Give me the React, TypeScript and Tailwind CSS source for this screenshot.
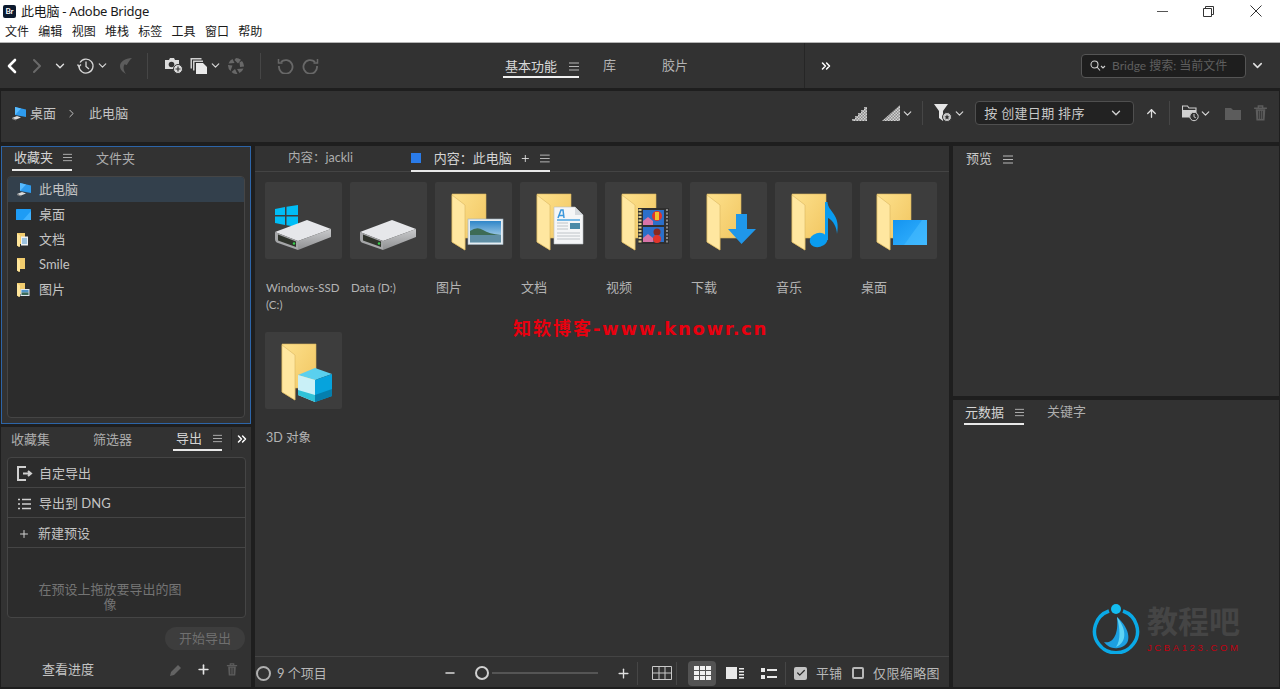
import { ChevronDown, ChevronLeft, ChevronRight, ChevronsRight, Plus, Minus, ArrowUp, Check } from "lucide-react";

const Burger = ({ className = "" }: { className?: string }) => (
  <svg width="10" height="9" viewBox="0 0 10 9" className={className}>
    <path d="M0 1h10M0 4.500h10M0 8h10" stroke="#b8b8b8" strokeWidth="1" fill="none" />
  </svg>
);

const Trash = ({ size = 15, color = "#5c5c5c" }: { size?: number; color?: string }) => (
  <svg width={size} height={size + 1} viewBox="0 0 14 15">
    <path d="M1 3h12M5 3V1h4v2" stroke={color} strokeWidth="1.400" fill="none" />
    <path d="M2.500 4h9l-.7 10.500H3.200Z" fill={color} />
    <path d="M5.300 5.500v7.500M7 5.500v7.500M8.700 5.500v7.500" stroke="#323232" strokeWidth=".8" />
  </svg>
);

const PcIcon = () => (
  <svg width="16" height="15" viewBox="0 0 16 15">
    <path d="M4 1l11 2.500v7.500L4 9Z" fill="#2e9bee" />
    <path d="M4 1l6 1.400-6 6.600Z" fill="#58bbff" />
    <path d="M1 12l5-2 4 1.500-5 2Z" fill="#dcdcdc" />
    <path d="M1 12l4 1.500v1L1 13Z" fill="#8a8a8a" />
  </svg>
);

const DesktopSmall = () => (
  <svg width="15" height="11" viewBox="0 0 15 11">
    <rect width="15" height="11" rx=".5" fill="#1e9cf5" />
    <path d="M7 11L15 2v9Z" fill="#3fb2ff" />
  </svg>
);

const FolderSmall = ({ badge }: { badge?: "doc" | "pic" }) => (
  <svg width="14" height="14" viewBox="0 0 14 14">
    <path d="M1 0h8v11H3v3L1 12.500Z" fill="#f2cd6e" />
    <path d="M1 .5l3 2V14l-3-1.500Z" fill="#ffe69b" />
    {badge === "doc" && (
      <g>
        <rect x="5" y="3.500" width="7" height="9" fill="#eef1f4" />
        <path d="M6 6h5M6 8h5M6 10h5" stroke="#4a93c9" strokeWidth="1" />
      </g>
    )}
    {badge === "pic" && (
      <g>
        <rect x="4.500" y="6" width="9" height="7" fill="#dfe8ef" />
        <rect x="5.500" y="7" width="7" height="2.500" fill="#4f94c8" />
        <rect x="5.500" y="9.500" width="7" height="2.500" fill="#3a6a5a" />
      </g>
    )}
  </svg>
);

const Folder = () => (
  <g>
    <path d="M17 12H51V56H30V68L17 60Z" fill="url(#fold)" stroke="#d9b660" strokeWidth=".6" />
    <path d="M17 13L30 23V68L17 60Z" fill="#ffe7a0" stroke="#d9b660" strokeWidth=".6" />
  </g>
);

const Defs = () => (
  <svg width="0" height="0" className="absolute">
    <defs>
      <linearGradient id="fold" x1="0" y1="0" x2="1" y2="1">
        <stop offset="0" stopColor="#fde18d" />
        <stop offset="1" stopColor="#f0c35c" />
      </linearGradient>
      <linearGradient id="sky" x1="0" y1="0" x2="0" y2="1">
        <stop offset="0" stopColor="#2f86c8" />
        <stop offset="1" stopColor="#cfe6f2" />
      </linearGradient>
      <linearGradient id="blue" x1="0" y1="0" x2="1" y2="1">
        <stop offset="0" stopColor="#1494f0" />
        <stop offset="1" stopColor="#36b4ff" />
      </linearGradient>
      <linearGradient id="body" x1="0" y1="0" x2="0" y2="1">
        <stop offset="0" stopColor="#c9cacc" />
        <stop offset="1" stopColor="#8f9092" />
      </linearGradient>
      <pattern id="chk" width="3" height="3" patternUnits="userSpaceOnUse">
        <rect width="3" height="3" fill="#8c8c8c" />
        <rect width="1.500" height="1.500" fill="#d4d4d4" />
        <rect x="1.500" y="1.500" width="1.500" height="1.500" fill="#d4d4d4" />
      </pattern>
    </defs>
  </svg>
);

const Drive = () => (
  <g>
    <path d="M10 50L42 38L66 47L33 59Z" fill="#e6e7ea" />
    <path d="M33 59L66 47V55L33 68Z" fill="url(#body)" />
    <path d="M10 50L33 59V68L13 61Q10 60 10 57Z" fill="#a5a6a8" />
    <path d="M13 52.500L31 59.500V65L13 58.500Z" fill="#30342c" />
    <circle cx="29" cy="61.500" r="1.200" fill="#35d04a" />
  </g>
);

const Thumb = ({ kind }: { kind: string }) => (
  <svg width="77" height="77" viewBox="0 0 77 77">
    {kind === "c" && (
      <g>
        <path d="M10 27L20 25V33H10ZM21.500 24.700L33 23V33H21.500ZM10 34.500H20V43L10 41ZM21.500 34.500H33V45L21.500 43.300Z" fill="#00bdf6" />
        <Drive />
      </g>
    )}
    {kind === "d" && <Drive />}
    {kind !== "c" && kind !== "d" && <Folder />}
    {kind === "pic" && (
      <g>
        <rect x="33" y="37" width="35" height="25.500" fill="#e6edf2" stroke="#9fb2c0" strokeWidth=".6" />
        <rect x="35" y="39" width="31" height="21.500" fill="url(#sky)" />
        <path d="M35 49Q42 44 48 48T66 53V55H35Z" fill="#3d6b55" />
        <rect x="35" y="53" width="31" height="7.500" fill="#5f8ea4" />
      </g>
    )}
    {kind === "doc" && (
      <g>
        <path d="M34 25H55L63 33V62H34Z" fill="#f5f6f7" stroke="#b9bfc4" strokeWidth=".6" />
        <path d="M55 25V33H63Z" fill="#d6dade" />
        <path d="M38 36L41 28H43L44 36M39 33.500H44" stroke="#3b97dc" strokeWidth="1.500" fill="none" />
        <path d="M37 38H60" stroke="#4ba4e0" strokeWidth="1.500" />
        <rect x="50" y="41" width="10" height="6" fill="#4a8aa8" />
        <path d="M37 41H48M37 44H48M37 47H48M37 51H60M37 54H60M37 57H60" stroke="#bfc4c8" strokeWidth="1" />
      </g>
    )}
    {kind === "video" && (
      <g>
        <rect x="33" y="26" width="31" height="36" fill="#2f2f2f" />
        <path d="M35 27v34" stroke="#d9c98a" strokeWidth="3" strokeDasharray="2 1.500" />
        <path d="M62 27v34" stroke="#8a8a8a" strokeWidth="2" strokeDasharray="2 1.500" />
        <rect x="38" y="28" width="21" height="15" fill="#2c6fc9" />
        <rect x="38" y="45" width="21" height="15" fill="#2c6fc9" />
        <path d="M38 39l5-4 5 4v4H38ZM38 56l5-4 5 4v4H38Z" fill="#d874a8" />
        <circle cx="52" cy="34" r="5" fill="#e2352a" />
        <circle cx="52" cy="50" r="3.500" fill="#8a2a20" />
        <circle cx="52" cy="57" r="4" fill="#e2352a" />
        <path d="M50 30h4v8h-4Z" fill="#f0c030" />
      </g>
    )}
    {kind === "down" && <path d="M46 32H57V47H66L51.500 62L38 47H46Z" fill="#1f97ea" />}
    {kind === "music" && (
      <g>
        <ellipse cx="43.500" cy="58" rx="9" ry="7" fill="#0a9cf0" transform="rotate(-15 43.500 58)" />
        <path d="M50 20H52.500C53 30 66 32 62 52C62 46 58 38 53 36V58H50Z" fill="#0a9cf0" />
      </g>
    )}
    {kind === "desk" && (
      <g>
        <rect x="33" y="38" width="34" height="25" fill="url(#blue)" />
        <path d="M44 63L62 38H67V63Z" fill="#4cc0ff" opacity=".5" />
      </g>
    )}
    {kind === "cube" && (
      <g>
        <path d="M33 43L50 36L67 42L50 48Z" fill="#5ad0ee" />
        <path d="M33 43L50 48V70L33 63Z" fill="#c9f0f7" />
        <path d="M33 58L50 63V70L33 63Z" fill="#2fc2d8" />
        <path d="M50 48L67 42V64L50 70Z" fill="#06a3dd" />
        <path d="M50 63L67 57V64L50 70Z" fill="#057fae" />
      </g>
    )}
  </svg>
);

const items = [
  { kind: "c", name: "Windows-SSD (C:)", size: "text-[11.500px]" },
  { kind: "d", name: "Data (D:)", size: "text-[11.500px]" },
  { kind: "pic", name: "图片", size: "text-[13px]" },
  { kind: "doc", name: "文档", size: "text-[13px]" },
  { kind: "video", name: "视频", size: "text-[13px]" },
  { kind: "down", name: "下载", size: "text-[13px]" },
  { kind: "music", name: "音乐", size: "text-[13px]" },
  { kind: "desk", name: "桌面", size: "text-[13px]" },
  { kind: "cube", name: "3D 对象", size: "text-[12.500px]" },
];

const Sep = ({ className = "" }: { className?: string }) => <div className={`w-px h-[26px] bg-[#464646] ${className}`} />;

function TitleBar() {
  return (
    <div className="h-[43px] bg-white border-b border-[#b5b5b5] shrink-0 text-[#1a1a1a]">
      <div className="h-[22px] flex items-center">
        <div className="ml-[3px] w-[13px] h-[13px] rounded-[2px] bg-[#0c1a2e] flex items-center justify-center text-[8px] leading-none font-bold text-white">Br</div>
        <div className="ml-[5px] text-[13px] leading-none font-['Noto_Sans','Noto_Sans_CJK_SC',sans-serif] tracking-[-0.3px]">此电脑 - Adobe Bridge</div>
        <div className="ml-auto flex items-center">
          <div className="w-[11px] h-px bg-[#555] mr-[35px]" />
          <svg width="11" height="11" viewBox="0 0 11 11" className="mr-[36px]">
            <path d="M.5 2.500h8v8h-8ZM2.500 2.500v-2h8v8h-2" stroke="#333" fill="none" />
          </svg>
          <svg width="12" height="12" viewBox="0 0 12 12" className="mr-[18px]">
            <path d="M.5.500l11 11M11.500.500l-11 11" stroke="#333" />
          </svg>
        </div>
      </div>
      <div className="h-[20px] flex items-center pl-[5px] gap-[9.300px] text-[12px] leading-none">
        {["文件", "编辑", "视图", "堆栈", "标签", "工具", "窗口", "帮助"].map((m) => (
          <span key={m}>{m}</span>
        ))}
      </div>
    </div>
  );
}

function Toolbar() {
  return (
    <div className="h-[45px] bg-[#323232] shrink-0 flex items-center">
      <ChevronLeft size={24} strokeWidth={2.600} className="text-white" />
      <ChevronRight size={24} strokeWidth={2} className="ml-[1px] text-[#6a6a6a]" />
      <ChevronDown size={14} strokeWidth={2.400} className="ml-[4px] text-[#e0e0e0]" />
      <svg width="18" height="18" viewBox="0 0 18 18" className="ml-[10px]" fill="none" stroke="#d6d6d6" strokeWidth="1.300">
        <path d="M3 5.500A7 7 0 1 1 2 9" />
        <path d="M.5 7.500L2 9.500L4 7.500M9 4.500V9.500L12 12" />
      </svg>
      <ChevronDown size={13} strokeWidth={2.200} className="ml-[1px] text-[#d6d6d6]" />
      <svg width="15" height="17" viewBox="0 0 15 17" className="ml-[9px]">
        <path d="M14 1C7 1 2 5 2 9c0 4 3 6 6 8-3-4-3-8-1-10 1 2 2 1 3-1 1-2 2-3 4-5Z" fill="#5c5c5c" />
      </svg>
      <Sep className="ml-[14px]" />
      <svg width="19" height="17" viewBox="0 0 19 17" className="ml-[16px]">
        <path d="M1 3h4l1-2h4l1 2h4v9H1Z" fill="#dcdcdc" />
        <circle cx="7.500" cy="7.500" r="2.800" fill="#323232" />
        <circle cx="14" cy="12" r="4.500" fill="#dcdcdc" stroke="#323232" />
        <path d="M14 9.500v5M11.500 12h5" stroke="#323232" strokeWidth="1.200" />
      </svg>
      <svg width="18" height="18" viewBox="0 0 18 18" className="ml-[7px]">
        <path d="M.5 1h11v1.500h-9.500v9H.5Z" fill="#d0d0d0" />
        <path d="M3 3.500h10v1.500h-8.500v8.500H3Z" fill="#d0d0d0" />
        <path d="M6 6h7l4 4v7H6Z" fill="#eaeaea" />
      </svg>
      <ChevronDown size={13} strokeWidth={2.200} className="ml-[1px] text-[#d6d6d6]" />
      <svg width="16" height="16" viewBox="0 0 16 16" className="ml-[6px]" fill="#686868">
        <path d="M8 0a8 8 0 0 1 5 1.800L10 5.500 6.500 2ZM14 3a8 8 0 0 1 2 5.500l-4 .500-.500-4.800ZM15.500 10.500a8 8 0 0 1-4 4.500l-2.500-4ZM9.500 16a8 8 0 0 1-6-2l3.500-3ZM2.500 13a8 8 0 0 1-2.500-6l4.500.500ZM.500 5.500a8 8 0 0 1 4-4.500l2 4Z" />
      </svg>
      <Sep className="ml-[16px]" />
      <svg width="17" height="17" viewBox="0 0 17 17" className="ml-[16px]" fill="none" stroke="#686868" strokeWidth="1.800">
        <path d="M4 5A6.800 6.800 0 1 1 2 9" />
        <path d="M1.500 2v4h4" strokeWidth="1.500" />
      </svg>
      <svg width="17" height="17" viewBox="0 0 17 17" className="ml-[8px]" fill="none" stroke="#686868" strokeWidth="1.800">
        <path d="M13 5A6.800 6.800 0 1 0 15 9" />
        <path d="M15.500 2v4h-4" strokeWidth="1.500" />
      </svg>
      <div className="ml-[184px] w-[76px] h-[25px] self-start mt-[10px] border-b-2 border-[#f0f0f0] flex items-center gap-[12px] pl-[2px] pt-[3px] text-[13px] text-[#d8d8d8]">
        <span className="whitespace-nowrap leading-none">基本功能</span>
        <Burger />
      </div>
      <span className="ml-[24px] text-[13px] text-[#b4b4b4] leading-none">库</span>
      <span className="ml-[46px] text-[13px] text-[#b4b4b4] leading-none">胶片</span>
      <div className="ml-[116px] w-px h-full bg-[#262626]" />
      <ChevronsRight size={14} strokeWidth={2.600} className="ml-[14px] text-white" />
      <div className="ml-[248px] w-[165px] h-[24px] bg-[#1e1e1e] border border-[#555] rounded-[4px] flex items-center pl-[8px] text-[12px] text-[#5e5e5e]">
        <svg width="16" height="12" viewBox="0 0 16 12" fill="none" stroke="#d0d0d0" strokeWidth="1.100">
          <circle cx="4.500" cy="4.500" r="3.500" />
          <path d="M7 7l3 3.500M11 6l2 2 2-2" />
        </svg>
        <span className="ml-[6px] leading-none whitespace-nowrap">Bridge 搜索: 当前文件</span>
      </div>
      <ChevronDown size={15} strokeWidth={2.400} className="ml-[4px] text-[#e0e0e0]" />
    </div>
  );
}

function PathBar() {
  return (
    <div className="h-[51px] bg-[#323232] shrink-0 mt-[3px] mx-px pb-[7px] flex items-center text-[13px] text-[#c4c4c4]">
      <div className="ml-[10px]"><PcIcon /></div>
      <span className="ml-[3px] leading-none">桌面</span>
      <ChevronRight size={13} strokeWidth={1.800} className="ml-[9px] text-[#c4c4c4]" />
      <span className="ml-[11px] leading-none whitespace-nowrap tracking-[0.1px]">此电脑</span>
      <svg width="16" height="15" viewBox="0 0 16 15" className="ml-[724px]">
        <path d="M0 15V13H3V10H6V7H9V4H12V1H15V15Z" fill="url(#chk)" />
      </svg>
      <svg width="18" height="16" viewBox="0 0 18 16" className="ml-[14px]">
        <path d="M0 16h18V0Z" fill="url(#chk)" />
      </svg>
      <ChevronDown size={13} strokeWidth={2.200} className="ml-px text-[#d6d6d6]" />
      <div className="ml-[8px]"><Sep className="!h-[24px]" /></div>
      <svg width="19" height="20" viewBox="0 0 19 20" className="ml-[11px]">
        <path d="M0 1h14L9 8v10L5 15V8Z" fill="#e6e6e6" />
        <circle cx="13" cy="14" r="4.500" fill="#c8c8c8" stroke="#323232" />
        <path d="M13 11.500l.8 1.700 1.700.200-1.300 1.200.4 1.800-1.600-.900-1.600.900.4-1.800-1.300-1.200 1.700-.200Z" fill="#323232" />
      </svg>
      <ChevronDown size={13} strokeWidth={2.200} className="text-[#d6d6d6]" />
      <div className="ml-[9px] w-[159px] h-[24px] bg-[#222] border border-[#4f4f4f] rounded-[4px] flex items-center justify-between pl-[8px] pr-[10px] text-[#c8c8c8] tracking-[0.3px]">
        <span className="leading-none whitespace-nowrap">按 创建日期 排序</span>
        <ChevronDown size={14} strokeWidth={2.400} className="text-[#d0d0d0]" />
      </div>
      <ArrowUp size={13} strokeWidth={2.400} className="ml-[11px] text-[#e0e0e0]" />
      <div className="ml-[11px]"><Sep className="!h-[24px]" /></div>
      <svg width="17" height="18" viewBox="0 0 17 18" className="ml-[12px]">
        <path d="M.5 2h5l1.500 2h7v9H.5Z" fill="none" stroke="#d0d0d0" strokeWidth="1.100" />
        <path d="M1 6h13v7H1Z" fill="#d0d0d0" />
        <circle cx="12" cy="12.500" r="4.200" fill="#323232" stroke="#d0d0d0" />
        <path d="M12 10v2.800l1.800 1" stroke="#d0d0d0" fill="none" />
      </svg>
      <ChevronDown size={13} strokeWidth={2.200} className="text-[#d6d6d6]" />
      <svg width="16" height="13" viewBox="0 0 16 13" className="ml-[13px]">
        <path d="M0 1h6l2 2h8v10H0Z" fill="#5c5c5c" />
      </svg>
      <div className="ml-[12px]"><Trash size={15} /></div>
    </div>
  );
}

function FavoritesPanel() {
  const rows = [
    { icon: <PcIcon />, label: "此电脑" },
    { icon: <DesktopSmall />, label: "桌面" },
    { icon: <FolderSmall badge="doc" />, label: "文档" },
    { icon: <FolderSmall />, label: "Smile" },
    { icon: <FolderSmall badge="pic" />, label: "图片" },
  ];
  return (
    <div className="h-[278px] bg-[#323232] border border-[#2d65a8] flex flex-col shrink-0">
      <div className="h-[24px] flex items-end pl-[10px] text-[13px]">
        <div className="w-[60px] h-[22px] border-b-2 border-[#e8e8e8] flex items-center gap-[10px] pl-[2px] pb-[3px] text-[#d4d4d4]">
          <span className="whitespace-nowrap leading-none">收藏夹</span>
          <Burger />
        </div>
        <span className="ml-[24px] h-[22px] pt-[3px] leading-none text-[#adadad] whitespace-nowrap">文件夹</span>
      </div>
      <div className="flex-1 mx-[5px] mt-[5px] mb-[5px] bg-[#2c2c2c] border border-[#454545] rounded-[4px] overflow-hidden text-[12px] text-[#c4c4c4]">
        {rows.map((r, i) => (
          <div key={r.label} className={`h-[25px] flex items-center ${i === 0 ? "bg-[#33404c]" : ""}`}>
            <div className="w-[31px] pl-[8px] flex items-center">{r.icon}</div>
            <span className="text-[13px] leading-none">{r.label}</span>
          </div>
        ))}
      </div>
    </div>
  );
}

function ExportPanel() {
  return (
    <div className="flex-1 mt-[3px] bg-[#323232] flex flex-col text-[13px]">
      <div className="h-[24px] mb-[6px] flex items-center pl-[10px] text-[#adadad]">
        <span className="w-[82px] leading-none">收藏集</span>
        <span className="w-[80px] leading-none">筛选器</span>
        <div className="w-[49px] h-[24px] border-b-2 border-[#e8e8e8] flex items-center gap-[11px] pl-[3px] text-[#d4d4d4]">
          <span className="whitespace-nowrap leading-none">导出</span>
          <Burger />
        </div>
        <div className="ml-[9px] w-px h-[21px] bg-[#262626]" />
        <ChevronsRight size={14} strokeWidth={2.600} className="ml-[3px] text-white" />
      </div>
      <div className="h-[161px] ml-[6px] w-[239px] border border-[#454545] rounded-[4px] bg-[#2c2c2c] flex flex-col text-[#c4c4c4]">
        <div className="h-[30px] border-b border-[#454545] pt-[2px] flex items-center">
          <svg width="16" height="15" viewBox="0 0 16 15" className="ml-[9px]" fill="none" stroke="#d0d0d0" strokeWidth="2">
            <path d="M9 1H1v13h8M6 7.500h7M11 5l3 2.500-3 2.500" />
          </svg>
          <span className="ml-[6px] leading-none">自定导出</span>
        </div>
        <div className="h-[30px] border-b border-[#454545] pt-[2px] flex items-center">
          <svg width="13" height="12" viewBox="0 0 13 12" className="ml-[10px]" stroke="#d0d0d0" strokeWidth="1.600">
            <path d="M0 1.500h2M0 6h2M0 10.500h2M4 1.500h9M4 6h9M4 10.500h9" />
          </svg>
          <span className="ml-[8px] leading-none whitespace-nowrap">导出到 DNG</span>
        </div>
        <div className="h-[30px] border-b border-[#454545] pt-[2px] flex items-center">
          <Plus size={12} strokeWidth={2} className="ml-[10px] text-[#d0d0d0]" />
          <span className="ml-[8px] leading-none">新建预设</span>
        </div>
        <div className="flex-1 flex flex-col items-start justify-end pl-[27px] pb-[5px] text-[#747474] leading-[15px]">
          <span className="w-[150px] text-center">在预设上拖放要导出的图像</span>
        </div>
      </div>
      <div className="mt-[9px] mr-[6px] self-end w-[80px] h-[23px] rounded-full bg-[#3d3d3d] text-[#6f6f6f] flex items-center justify-center leading-none">开始导出</div>
      <div className="mt-[12px] flex items-center text-[#c4c4c4]">
        <span className="ml-[41px] leading-none">查看进度</span>
        <svg width="12" height="12" viewBox="0 0 12 12" className="ml-[76px]" fill="#636363">
          <path d="M0 12l1-4 7-7 3 3-7 7Z" />
        </svg>
        <Plus size={15} strokeWidth={2.600} className="ml-[14px] text-[#e4e4e4]" />
        <div className="ml-[15px]"><Trash size={12} /></div>
      </div>
    </div>
  );
}

function ContentPanel() {
  return (
    <div className="w-[694px] ml-[4px] bg-[#323232] flex flex-col">
      <div className="h-[26px] shrink-0 border-b border-[#444] flex items-end text-[12px]">
        <span className="ml-[33px] w-[123px] pb-[7px] text-[12.500px] leading-none text-[#adadad] whitespace-nowrap">内容：jackli</span>
        <div className="w-[139px] h-[23px] -mb-px border-b-2 border-[#e8e8e8] pb-[2px] flex items-center text-[#d4d4d4]">
          <div className="w-[10px] h-[10px] bg-[#2a7be8] -mt-[2px]" />
          <span className="ml-[13px] text-[13px] leading-none whitespace-nowrap">内容：此电脑</span>
          <Plus size={11} strokeWidth={2} className="ml-[8px] text-[#e0e0e0]" />
          <Burger className="ml-[10px]" />
        </div>
      </div>
      <div className="flex-1 pl-[10px] pt-[10px] grid grid-cols-[repeat(8,85px)] auto-rows-[150px] text-[#b4b4b4]">
        {items.map((it) => (
          <div key={it.kind} className="flex flex-col">
            <div className="w-[77px] h-[77px] bg-[#3d3d3d] rounded-[2px]"><Thumb kind={it.kind} /></div>
            <div className={`mt-[20px] w-[80px] pl-px leading-[17px] ${it.size}`}>{it.name}</div>
          </div>
        ))}
      </div>
      <div className="h-[31px] shrink-0 border-t border-[#444] pt-[2px] flex items-center text-[13px] text-[#b8b8b8]">
        <div className="ml-[1px] w-[15px] h-[15px] rounded-full border-2 border-[#b0b0b0]" />
        <span className="ml-[6px] w-[50px] leading-none whitespace-nowrap">9 个项目</span>
        <Minus size={14} strokeWidth={2.200} className="ml-[116px] text-[#d8d8d8]" />
        <div className="ml-[18px] w-[14px] h-[14px] rounded-full border-2 border-[#d0d0d0]" />
        <div className="ml-[3px] w-[106px] h-[2px] bg-[#555]" />
        <Plus size={15} strokeWidth={2.200} className="ml-[18px] text-[#e0e0e0]" />
        <div className="ml-[6px]"><Sep className="!h-[23px]" /></div>
        <svg width="20" height="14" viewBox="0 0 20 14" className="ml-[14px]" fill="none" stroke="#c8c8c8">
          <path d="M.5.500h19v13H.5ZM7 .5v13M13 .5v13M.5 7h19" />
        </svg>
        <div className="ml-[4px]"><Sep className="!h-[23px]" /></div>
        <div className="ml-[11px] w-[28px] h-[25px] rounded-[4px] bg-[#535353] flex items-center justify-center">
          <svg width="17" height="14" viewBox="0 0 17 14" fill="#f0f0f0">
            <path d="M0 0h5v4H0ZM6 0h5v4H6ZM12 0h5v4h-5ZM0 5h5v4H0ZM6 5h5v4H6ZM12 5h5v4h-5ZM0 10h5v4H0ZM6 10h5v4H6ZM12 10h5v4h-5Z" />
          </svg>
        </div>
        <svg width="18" height="12" viewBox="0 0 18 12" className="ml-[10px]" fill="#e8e8e8">
          <path d="M0 0h11v12H0ZM13 1h5v1.500h-5ZM13 4h5v1.500h-5ZM13 7h5v1.500h-5ZM13 10h5v1.500h-5Z" />
        </svg>
        <svg width="16" height="11" viewBox="0 0 16 11" className="ml-[17px]" fill="#e8e8e8">
          <path d="M0 0h4v4H0ZM0 7h4v4H0ZM6 1h10v2H6ZM6 8h10v2H6Z" />
        </svg>
        <div className="ml-[8px]"><Sep className="!h-[23px]" /></div>
        <div className="ml-[8px] w-[13px] h-[13px] rounded-[2px] bg-[#c4c4c4] flex items-center justify-center">
          <Check size={10} strokeWidth={3} className="text-[#2a2a2a]" />
        </div>
        <span className="ml-[9px] text-[13px] leading-none whitespace-nowrap">平铺</span>
        <div className="ml-[10px] w-[12px] h-[12px] rounded-[2px] border-2 border-[#b8b8b8]" />
        <span className="ml-[9px] text-[13px] leading-none whitespace-nowrap tracking-[0.4px]">仅限缩略图</span>
      </div>
    </div>
  );
}

function RightColumn() {
  return (
    <div className="w-[326px] ml-[4px] flex flex-col text-[13px]">
      <div className="h-[250px] bg-[#323232] shrink-0 flex items-start">
        <span className="ml-[13px] mt-[6px] leading-none text-[#c8c8c8]">预览</span>
        <Burger className="ml-[11px] mt-[9px]" />
      </div>
      <div className="flex-1 mt-[4px] bg-[#323232]">
        <div className="h-[25px] flex items-end pl-[11px]">
          <div className="w-[60px] h-[23px] border-b-2 border-[#e8e8e8] flex items-center gap-[11px] pl-px text-[#d4d4d4]">
            <span className="whitespace-nowrap leading-none">元数据</span>
            <Burger />
          </div>
          <span className="ml-[23px] pb-[7px] leading-none text-[#adadad] whitespace-nowrap">关键字</span>
        </div>
      </div>
    </div>
  );
}

function Watermarks() {
  return (
    <>
      <div className="absolute left-[513px] top-[317px] text-[18px] leading-[22px] font-bold text-[#e8000f] whitespace-nowrap">
        <span className="tracking-[2px]">知软博客</span>
        <span className="font-['DejaVu_Sans',sans-serif] tracking-[1.650px]">-www.knowr.cn</span>
      </div>
      <div className="absolute left-[1092px] top-[600px] flex items-start">
        <svg width="48" height="54" viewBox="0 0 48 54" fill="none">
          <path d="M17 11A21.500 21.500 0 1 0 31 11" stroke="#0aa9e6" strokeWidth="3.500" />
          <circle cx="24" cy="9" r="5" fill="#14bdf0" />
          <path d="M25 17C38 28 42 46 26 48C20 49 15 46 12 42C20 44 27 36 25 17Z" fill="#1c9fe0" />
          <path d="M25 17C34 28 36 42 24 47C29 40 28 28 25 17Z" fill="#5fd4f5" />
        </svg>
        <div className="ml-[7px] mt-[3px] flex flex-col">
          <span className="text-[31px] leading-[36px] font-bold text-[#454545] whitespace-nowrap">教程吧</span>
          <span className="text-[9.500px] leading-[10px] mt-[4px] font-['Liberation_Sans',sans-serif] text-[#c00010] tracking-[2.600px] whitespace-nowrap">JCBA123.COM</span>
        </div>
      </div>
    </>
  );
}

export default function App() {
  return (
    <div className="relative h-[689px] w-[1280px] overflow-hidden flex flex-col bg-[#1e1e1e] font-['Lato','Noto_Sans_CJK_SC',sans-serif]">
      <Defs />
      <TitleBar />
      <Toolbar />
      <PathBar />
      <div className="flex-1 min-h-0 mt-[4px] mb-[2px] flex">
        <div className="w-[250px] ml-px flex flex-col">
          <FavoritesPanel />
          <ExportPanel />
        </div>
        <ContentPanel />
        <RightColumn />
      </div>
      <Watermarks />
    </div>
  );
}
